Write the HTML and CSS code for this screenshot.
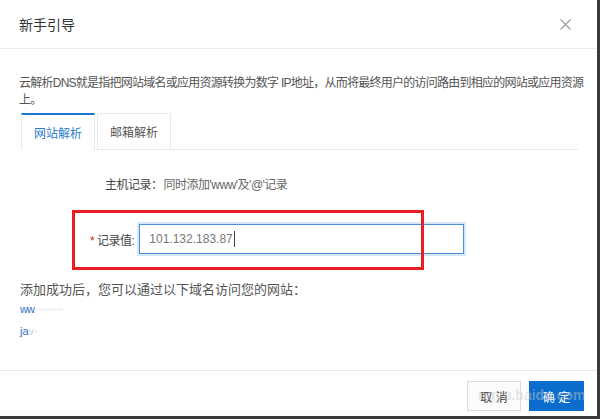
FILE: index.html
```html
<!DOCTYPE html>
<html lang="zh-CN">
<head>
  <meta charset="UTF-8">
  <title>新手引导</title>
  <meta name="viewport" content="width=device-width, initial-scale=1">
  <link rel="stylesheet" href="styles.css">
</head>
<body>

  <div class="dialog">
    <!-- header -->
    <div class="dialog-head">
      <span class="dialog-title">新手引导</span>
      <span class="dialog-close">
        <svg width="11" height="11" viewBox="0 0 11 11"><path d="M0.5 0.5 L10.5 10.5 M10.5 0.5 L0.5 10.5" stroke="#999" stroke-width="1.1" fill="none"/></svg>
      </span>
    </div>

    <!-- body -->
    <div class="dialog-body">
      <p class="intro">云解析DNS就是指把网站域名或应用资源转换为数字 IP地址，从而将最终用户的访问路由到相应的网站或应用资源上。</p>

      <div class="tabs">
        <div class="tab active">网站解析</div>
        <div class="tab">邮箱解析</div>
      </div>

      <div class="row row-host">
        <span class="label">主机记录：</span>
        <span class="value">同时添加'www'及'@'记录</span>
      </div>

      <div class="row row-value">
        <span class="label"><em class="req">*</em> 记录值:</span>
        <div class="input">101.132.183.87<span class="caret"></span></div>
        <div class="mark"></div>
      </div>

      <p class="done">添加成功后，您可以通过以下域名访问您的网站：</p>
      <div class="link link-1">ww<span class="fade">.··········</span></div>
      <div class="link link-2">ja<span class="fade">v·</span></div>
    </div>

    <!-- footer -->
    <div class="dialog-foot">
      <button class="btn btn-cancel">取 消</button>
      <button class="btn btn-ok">确 定</button>
      <span class="watermark">ngyu.baidu.com</span>
    </div>
  </div>

</body>
</html>
```

FILE: styles.css
```css
body { margin: 0; background: #3b3b3b; font-family: "Liberation Sans", "Noto Sans CJK SC", sans-serif; }

.dialog {
  width: 597px; height: 416px; background: #fff;
  display: flex; flex-direction: column;
}

/* header */
.dialog-head {
  height: 48px; border-bottom: 1px solid #ebedf0;
  display: flex; align-items: center; justify-content: space-between;
  padding: 0 26px 0 19px;
}
.dialog-title { font-size: 14px; color: #333; }
.dialog-close { display: flex; }

/* body */
.dialog-body { flex: 1; padding: 26px 19px 0 19px; }
.intro { margin: 0 -14px 0 0; font-size: 12px; line-height: 17px; color: #555; letter-spacing: -0.75px; }

.tabs {
  display: flex; gap: 2px; margin: 4px 0 0 2px;
  border-bottom: 1px solid #e6e9ee; height: 36px;
}
.tab {
  width: 72px; height: 35px; border: 1px solid #e6e9ee; border-bottom: none;
  font-size: 12px; color: #555; display: flex; align-items: center; justify-content: center;
  background: #fff;
}
.tab.active { border-top: 2px solid #1d77d0; color: #2b7bd0; margin-bottom: -1px; height: 35px; }

.row { display: flex; align-items: center; font-size: 12px; letter-spacing: -0.5px; }
.row-host { margin-top: 25px; padding-left: 86px; height: 16px; color: #444; }
.row-host .value { color: #666; margin-left: 1px; }

.row-value { position: relative; margin-top: 33px; padding-left: 71px; height: 30px; }
.row-value .label { color: #444; margin-right: 5px; }
.req { font-style: normal; color: #e02020; }
.input {
  width: 314px; height: 28px; border: 1px solid #4a90d9; box-shadow: 0 0 0 2px #d6e7f8;
  padding-left: 9px; display: flex; align-items: center; color: #777; font-size: 12px; letter-spacing: 0;
}
.caret { width: 1px; height: 16px; background: #444; margin-left: 1px; }
.mark {
  position: absolute; left: 53px; top: -14px; width: 346px; height: 54px;
  border: 3px solid #ec1c24;
}

.done { margin: 25px 0 0 1px; font-size: 13px; color: #555; }
.link { font-size: 11px; color: #2e6fc4; margin-left: 1px; }
.link-1 { margin-top: 5px; letter-spacing: -1px; }
.link-2 { margin-top: 10px; }
.fade { color: #c5d4ea; }

/* footer */
.dialog-foot {
  position: relative; height: 46px; border-top: 1px solid #e8e8e8;
  display: flex; justify-content: flex-end; align-items: flex-start;
  gap: 8px; padding: 10px 13px 0 0; box-sizing: border-box;
}
.btn {
  height: 30px; font-size: 12px; font-family: inherit; border-radius: 0; cursor: pointer;
}
.btn-cancel { width: 54px; background: #fbfbfb; border: 1px solid #dcdcdc; color: #333; }
.btn-ok { width: 55px; background: #0a6dce; border: 1px solid #0a6dce; color: #fff; }
.watermark {
  position: absolute; left: 478px; top: 16px; font-size: 14px; font-weight: bold;
  color: rgba(200, 200, 200, 0.45);
}
```
